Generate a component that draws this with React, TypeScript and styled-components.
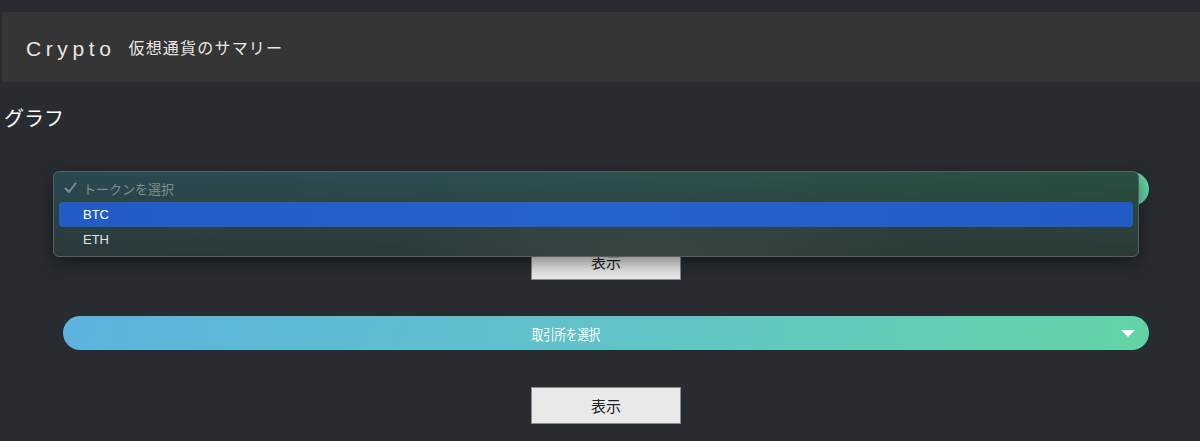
import React from "react";
import styled, { createGlobalStyle } from "styled-components";

const GlobalStyle = createGlobalStyle`
  html, body {
    margin: 0;
    padding: 0;
    background: #282c31;
  }
  body {
    font-family: "Noto Sans CJK JP", "Noto Sans", "Liberation Sans", sans-serif;
  }
`;

const Page = styled.div`
  min-height: 441px;
  background: #282c31;
  padding-top: 12px;
  box-sizing: border-box;
  overflow: hidden;
`;

const Header = styled.header`
  margin-left: 2px;
  height: 70px;
  background: #353535;
  display: flex;
  align-items: center;
  padding-left: 24px;
  gap: 13px;
`;

const Brand = styled.span`
  font-family: "Liberation Sans", "Noto Sans", sans-serif;
  font-size: 21px;
  letter-spacing: 4.6px;
  color: #ece6e2;
  line-height: 1;
  padding-top: 2px;
`;

const Subtitle = styled.span`
  font-size: 16px;
  letter-spacing: 1.2px;
  color: #ece6e2;
  line-height: 1;
`;

const SectionTitle = styled.h2`
  margin: 22px 0 0 4px;
  font-size: 20px;
  font-weight: 400;
  line-height: 28px;
  color: #ffffff;
`;

const Form = styled.div`
  display: flex;
  flex-direction: column;
  align-items: center;
  padding: 0 51px 0 63px;
  margin-top: 40px;
`;

const SelectWrap = styled.div<{ $gap?: number }>`
  position: relative;
  width: 100%;
  margin-top: ${(p) => p.$gap ?? 0}px;
`;

const Pill = styled.div`
  height: 34px;
  border-radius: 17px;
  box-sizing: border-box;
  padding-right: 80px;
  background: linear-gradient(100deg, #5db3de 0%, #61c3c9 50%, #63d4a6 100%);
  display: flex;
  align-items: center;
  justify-content: center;
  position: relative;
  color: #ffffff;
`;

const PillLabel = styled.span`
  display: inline-block;
  font-size: 15px;
  transform: scaleX(0.76);
`;

const Caret = styled.span`
  position: absolute;
  right: 14px;
  top: 14px;
  width: 0;
  height: 0;
  border-left: 7px solid transparent;
  border-right: 7px solid transparent;
  border-top: 7px solid #ffffff;
`;

const Menu = styled.div`
  position: absolute;
  top: -1px;
  left: -10px;
  width: 1086px;
  height: 86px;
  box-sizing: border-box;
  border: 1px solid #58605e;
  border-radius: 6px;
  padding: 5px 5px 4px;
  background:
    radial-gradient(ellipse 260px 60px at 600px 86px, rgba(70, 80, 78, 0.55), rgba(70, 80, 78, 0) 100%),
    linear-gradient(180deg, rgba(40, 48, 50, 0) 0%, rgba(44, 54, 54, 0.85) 100%),
    linear-gradient(90deg, #294951 0%, #2d5050 50%, #28503f 100%);
  box-shadow: 0 6px 18px rgba(0, 0, 0, 0.45);
  z-index: 2;
`;

const MenuRow = styled.div<{ $active?: boolean; $muted?: boolean; $h: number }>`
  height: ${(p) => p.$h}px;
  display: flex;
  align-items: center;
  border-radius: 4px;
  padding-left: 5px;
  gap: 6px;
  font-family: "Liberation Sans", "Noto Sans CJK JP", sans-serif;
  font-size: 13px;
  color: ${(p) => (p.$muted ? "#7f8d8c" : p.$active ? "#ffffff" : "#dfe3e2")};
  background: ${(p) =>
    p.$active ? "linear-gradient(90deg, #225bc6 0%, #2563cc 50%, #225bc6 100%)" : "transparent"};
  margin-bottom: ${(p) => (p.$muted ? 3 : 0)}px;
`;

const CheckSlot = styled.span`
  width: 13px;
  display: flex;
  align-items: center;
`;

const ShowButton = styled.button<{ $gap: number }>`
  margin-top: ${(p) => p.$gap}px;
  width: 150px;
  height: 37px;
  background: #e9e9e9;
  border: 1px solid #8a8a8a;
  border-radius: 0;
  font-family: "Noto Sans CJK JP", sans-serif;
  font-size: 15px;
  color: #222;
  position: relative;
  z-index: 1;
`;

const Check = () => (
  <svg width="13" height="12" viewBox="0 0 13 12">
    <path d="M1.5 6.5 L5 10 L11.5 1.5" fill="none" stroke="#7f8d8c" strokeWidth="2" strokeLinecap="round" />
  </svg>
);

export default function App() {
  return (
    <>
      <GlobalStyle />
      <Page>
        <Header>
          <Brand>Crypto</Brand>
          <Subtitle>仮想通貨のサマリー</Subtitle>
        </Header>
        <SectionTitle>グラフ</SectionTitle>
        <Form>
          <SelectWrap>
            <Pill>
              <PillLabel>トークンを選択</PillLabel>
              <Caret />
            </Pill>
            <Menu>
              <MenuRow $muted $h={22}>
                <CheckSlot>
                  <Check />
                </CheckSlot>
                トークンを選択
              </MenuRow>
              <MenuRow $active $h={25}>
                <CheckSlot />
                BTC
              </MenuRow>
              <MenuRow $h={25}>
                <CheckSlot />
                ETH
              </MenuRow>
            </Menu>
          </SelectWrap>
          <ShowButton $gap={37}>表示</ShowButton>
          <SelectWrap $gap={36}>
            <Pill>
              <PillLabel>取引所を選択</PillLabel>
              <Caret />
            </Pill>
          </SelectWrap>
          <ShowButton $gap={37}>表示</ShowButton>
        </Form>
      </Page>
    </>
  );
}
